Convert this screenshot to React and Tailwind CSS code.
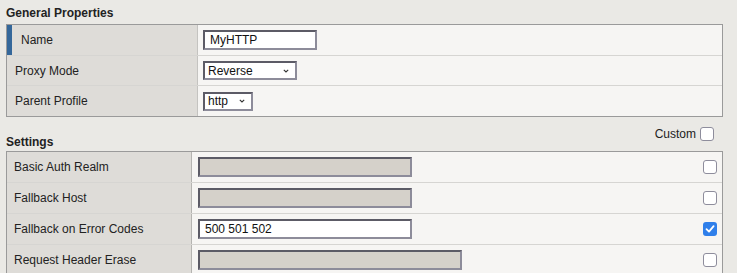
import React from "react";

function Check({ checked }) {
  if (checked) {
    return (
      <div className="w-[14px] h-[14px] rounded-[3px] bg-[#2f7fea] flex items-center justify-center">
        <svg width="10" height="10" viewBox="0 0 10 10">
          <path d="M1.5 5.2 L4 7.6 L8.6 2.2" fill="none" stroke="white" strokeWidth="1.8" strokeLinecap="round" strokeLinejoin="round" />
        </svg>
      </div>
    );
  }
  return <div className="w-[14px] h-[14px] rounded-[3px] bg-white border border-[#8e8d9c]" />;
}

function TextBox({ value, width, disabled }) {
  return (
    <div
      className={`h-[20px] border-2 border-t-[#5c5b66] border-l-[#5c5b66] border-b-[#8d8c9a] border-r-[#8d8c9a] flex items-center px-[5px] text-[12px] text-[#111] ${
        disabled ? "bg-[#d5d1ca]" : "bg-white"
      }`}
      style={{ width }}
    >
      {value}
    </div>
  );
}

function SelectBox({ value, width }) {
  return (
    <div
      className="h-[19px] border-2 border-t-[#5c5b66] border-l-[#5c5b66] border-b-[#8d8c9a] border-r-[#8d8c9a] bg-white flex items-center justify-between pl-[3px] pr-[5px] text-[12px] text-[#111]"
      style={{ width }}
    >
      <span>{value}</span>
      <svg width="8" height="6" viewBox="0 0 8 6">
        <path d="M1.8 1.8 L4 4 L6.2 1.8" fill="none" stroke="#333" strokeWidth="1.1" />
      </svg>
    </div>
  );
}

export default function App() {
  const general = [
    { label: "Name", el: <TextBox value="MyHTTP" width={114} />, marker: true, h: "h-[30px]" },
    { label: "Proxy Mode", el: <SelectBox value="Reverse" width={94} />, h: "h-[30px]" },
    { label: "Parent Profile", el: <SelectBox value="http" width={50} />, h: "h-[31px]" },
  ];
  const settings = [
    { label: "Basic Auth Realm", w: 214, disabled: true, value: "", checked: false },
    { label: "Fallback Host", w: 214, disabled: true, value: "", checked: false },
    { label: "Fallback on Error Codes", w: 214, disabled: false, value: "500 501 502", checked: true },
    { label: "Request Header Erase", w: 264, disabled: true, value: "", checked: false },
  ];
  return (
    <div className="w-[737px] h-[273px] overflow-hidden bg-[#eae9e5] font-['Liberation_Sans',Arial,sans-serif] text-[12px] text-[#222]">
      <div className="pl-[6px] pr-[14px]">
        <div className="h-[24px] pt-[6px] font-bold text-[12px] leading-[15px] text-[#222]">General Properties</div>
        <div className="border border-[#9a9a9a]">
          {general.map((r, i) => (
            <div key={r.label} className={`flex ${r.h} ${i > 0 ? "border-t border-[#d6d5d2]" : ""}`}>
              <div className="w-[191px] shrink-0 bg-[#dedcd8] flex items-center border-r border-[#c4c3c0]">
                {r.marker ? (
                  <div className="w-[5px] self-stretch bg-[#34679a]" />
                ) : null}
                <span className={r.marker ? "pl-[9px]" : "pl-[8px]"}>{r.label}</span>
              </div>
              <div className="flex-1 bg-[#f6f5f3] flex items-center pl-[5px]">{r.el}</div>
            </div>
          ))}
        </div>
        <div className="flex justify-between h-[34px]">
          <div className="font-bold text-[12px] leading-[14px] mt-[18px]">Settings</div>
          <div className="flex items-center gap-[4px] pr-[9px] mt-[10px] h-[14px] text-[12px] text-[#222]">
            <span>Custom</span>
            <Check checked={false} />
          </div>
        </div>
        <div className="border border-[#9a9a9a]">
          {settings.map((r, i) => (
            <div key={r.label} className={`flex ${i > 0 ? "h-[31px] border-t border-[#d6d5d2]" : "h-[30px]"}`}>
              <div className="w-[185px] shrink-0 bg-[#dedcd8] flex items-center pl-[7px] border-r border-[#b5b4b1]">
                {r.label}
              </div>
              <div className="flex-1 bg-[#f6f5f3] flex items-center pl-[6px] pr-[5px] justify-between">
                <TextBox value={r.value} width={r.w} disabled={r.disabled} />
                <Check checked={r.checked} />
              </div>
            </div>
          ))}
        </div>
      </div>
    </div>
  );
}
